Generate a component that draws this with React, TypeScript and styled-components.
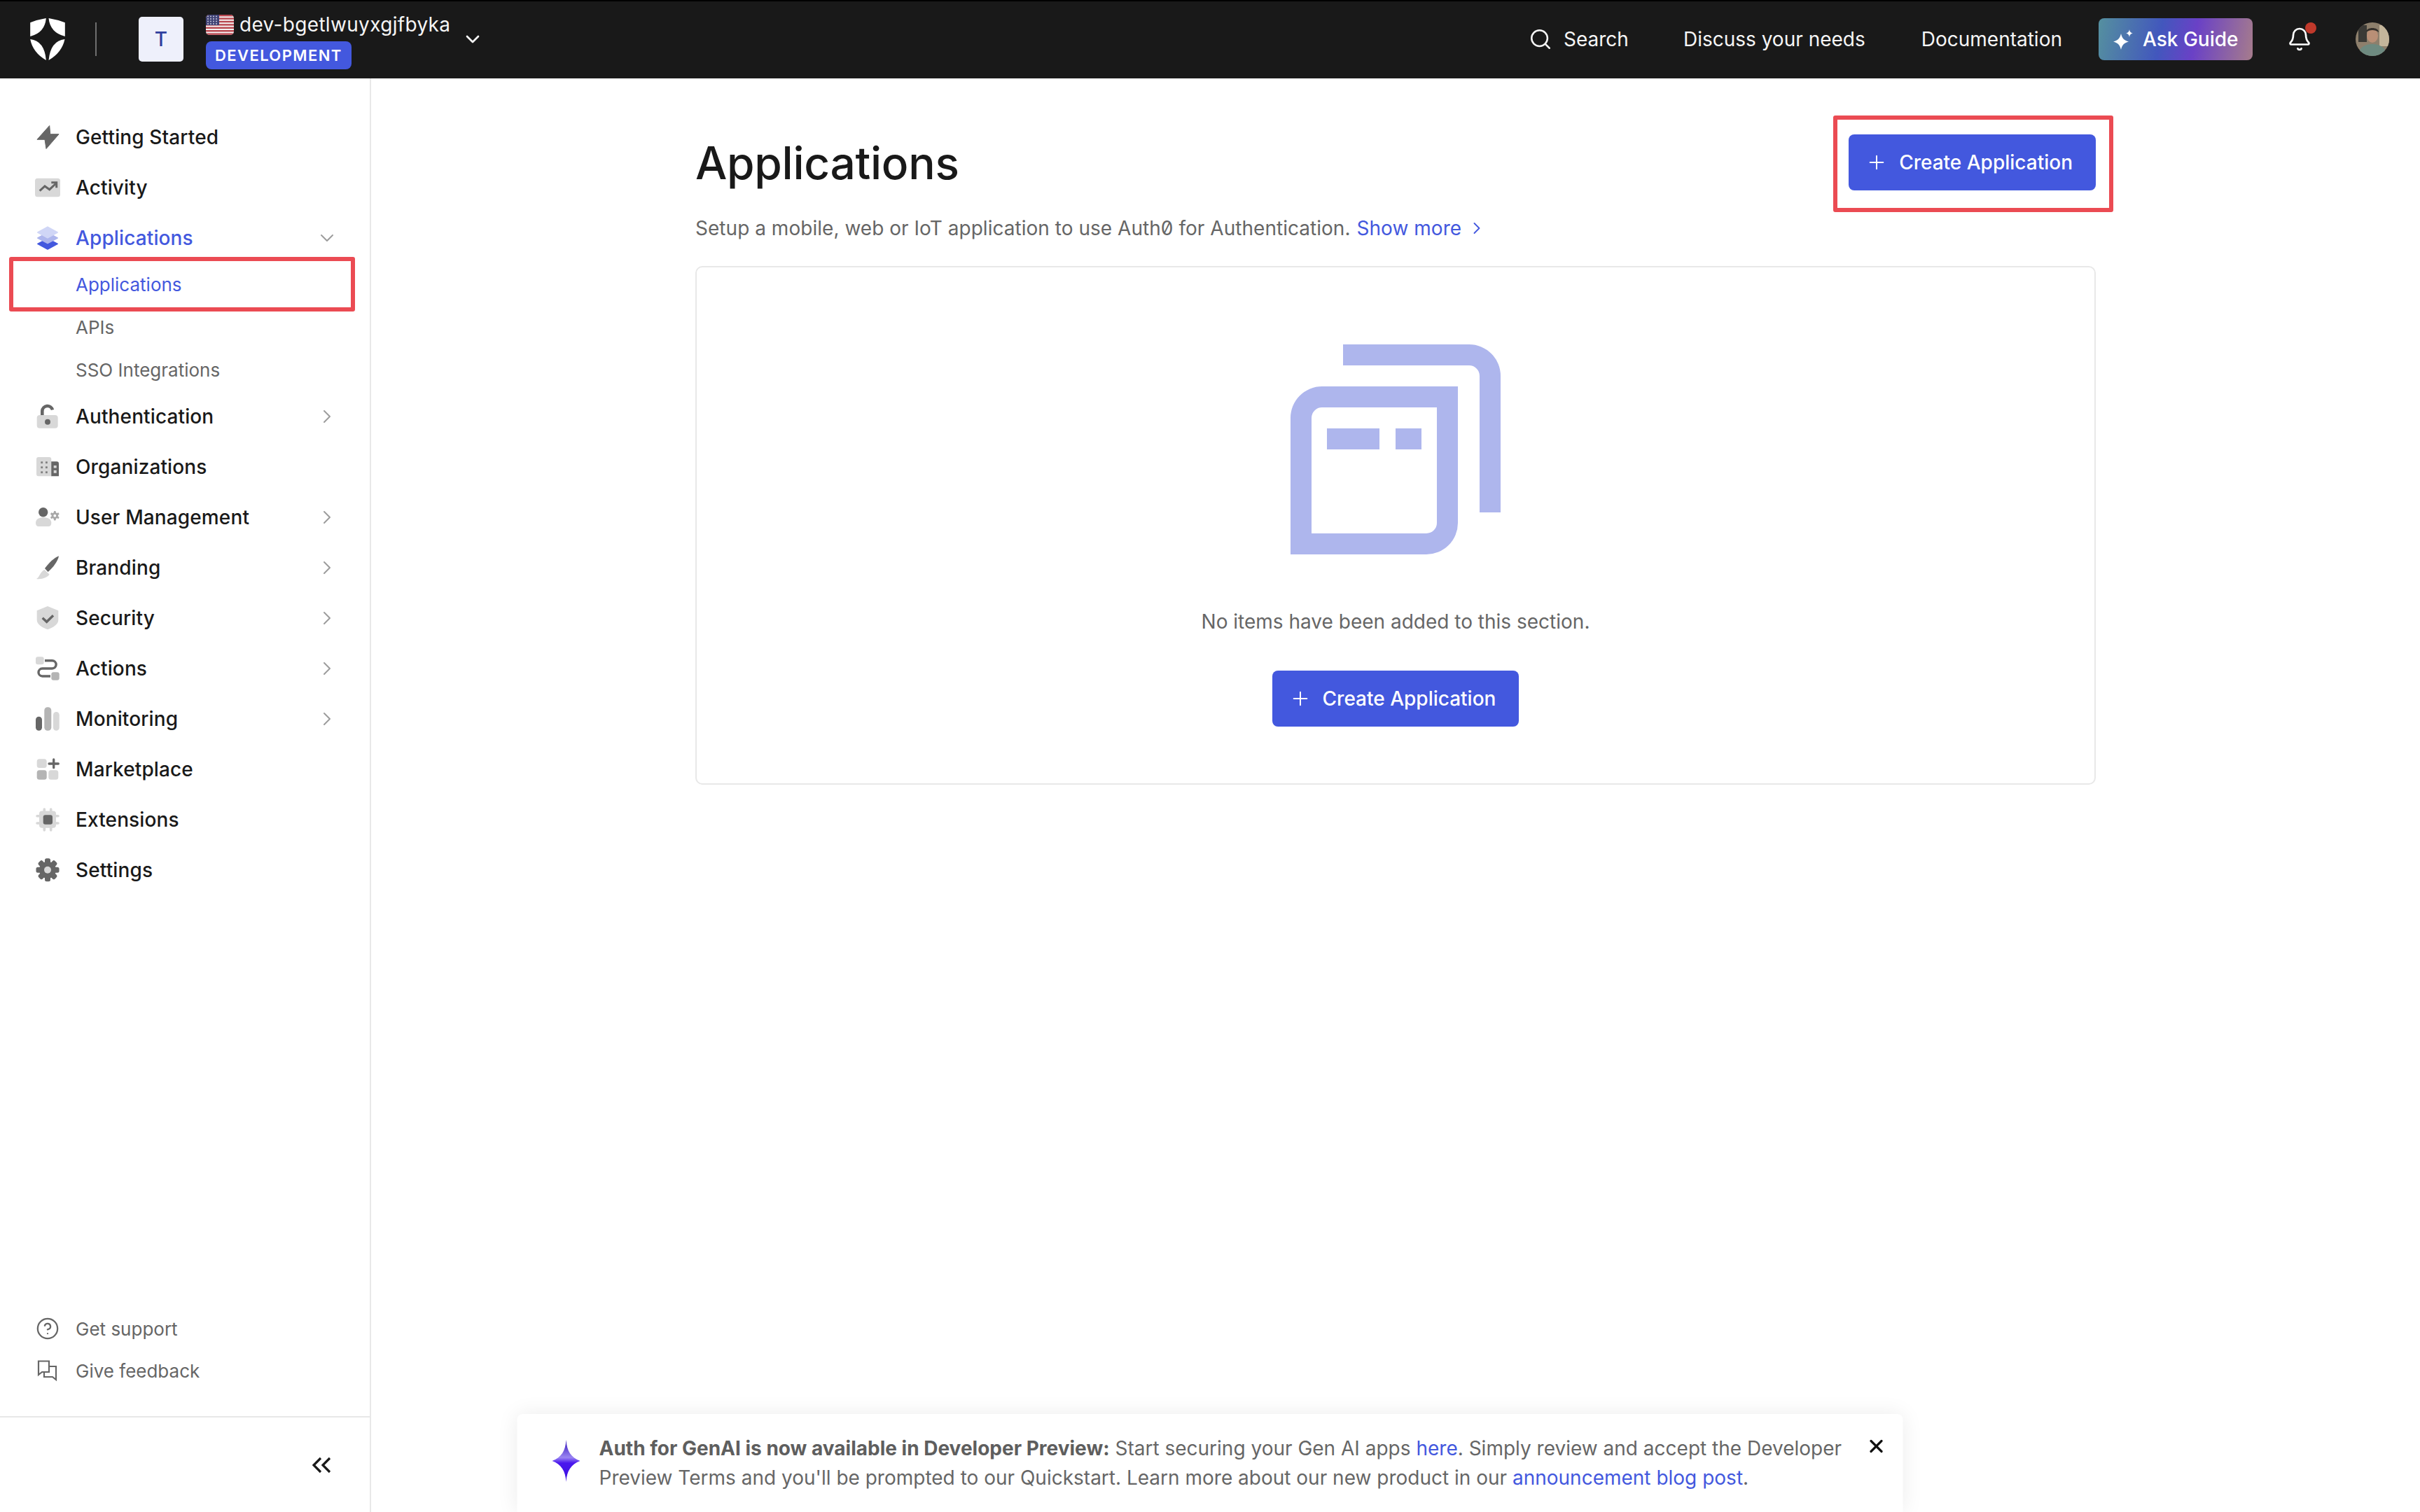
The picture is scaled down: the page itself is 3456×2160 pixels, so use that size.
import React from 'react';
import styled, { createGlobalStyle } from 'styled-components';
import { Search, Bell, Plus, ChevronRight, ChevronDown, CircleHelp, X } from 'lucide-react';

const Global = createGlobalStyle`
  html, body { margin: 0; padding: 0; background: #fff; }
  * { box-sizing: border-box; }
  body { font-family: Inter, "Noto Sans", sans-serif; color: #191919; }
`;

const Page = styled.div`
  position: relative;
  width: 3456px;
  height: 2160px;
  display: flex;
  flex-direction: column;
  overflow: hidden;
  background: #fff;
`;

const Header = styled.header`
  height: 112px;
  flex: none;
  background: #191919;
  border-top: 2px solid #000;
  padding: 0 44px 2px 43px;
  display: flex;
  align-items: center;
  color: #f5f5f5;
`;
const Divider = styled.div`
  width: 2px;
  height: 48px;
  background: #6f6f6f;
  margin: 0 60px 0 43px;
`;
const TenantBox = styled.div`
  width: 64px;
  height: 64px;
  border-radius: 5px;
  background: #eef0fb;
  color: #2f3f9e;
  font-size: 28px;
  font-weight: 500;
  display: flex;
  align-items: center;
  justify-content: center;
  margin-right: 32px;
`;
const TenantInfo = styled.div`
  display: flex;
  flex-direction: column;
  gap: 8px;
  align-items: flex-start;
  padding-top: 6px;
`;
const TenantName = styled.div`
  display: flex;
  align-items: center;
  gap: 8px;
  font-size: 28px;
  line-height: 32px;
  letter-spacing: 0.33px;
  color: #f5f5f5;
`;
const Badge = styled.div`
  height: 40px;
  padding: 0 13px;
  border-radius: 8px;
  background: #4358de;
  color: #fff;
  font-size: 22px;
  font-weight: 600;
  letter-spacing: 1.4px;
  display: flex;
  align-items: center;
`;
const TenantChevron = styled.div`
  margin-left: 16px;
  display: flex;
  color: #f5f5f5;
`;
const HeaderSpacer = styled.div`
  flex: 1;
`;
const NavGroup = styled.nav`
  display: flex;
  align-items: center;
  gap: 80px;
`;
const NavSearch = styled.a`
  display: flex;
  align-items: center;
  gap: 16px;
  font-size: 28px;
  line-height: 40px;
  color: #f5f5f5;
  margin-right: -2px;
`;
const NavLink = styled.a`
  font-size: 28px;
  line-height: 40px;
  color: #f5f5f5;
`;
const AskGuide = styled.button`
  margin-left: 52px;
  width: 220px;
  height: 60px;
  border: 0;
  border-radius: 8px;
  background: linear-gradient(100deg, #55909f 0%, #4257bd 40%, #6a41c6 62%, #a67c8c 100%);
  color: #fff;
  font: 500 28px Inter, sans-serif;
  display: flex;
  align-items: center;
  gap: 11px;
  padding: 0 0 0 20px;
`;
const BellWrap = styled.div`
  position: relative;
  margin-left: 49px;
  display: flex;
  color: #fff;
`;
const BellDot = styled.span`
  position: absolute;
  top: -6px;
  right: -6px;
  width: 16px;
  height: 16px;
  border-radius: 50%;
  background: #c0392b;
`;
const Avatar = styled.svg`
  margin-left: 62px;
  width: 48px;
  height: 48px;
  border-radius: 50%;
`;

const Body = styled.div`
  flex: 1;
  display: flex;
  min-height: 0;
`;
const Sidebar = styled.aside`
  width: 530px;
  flex: none;
  border-right: 2px solid #e8e8e8;
  display: flex;
  flex-direction: column;
  padding-top: 48px;
`;
const NavItem = styled.div<{ $active?: boolean }>`
  height: 72px;
  padding: 0 45px 0 44px;
  display: flex;
  align-items: center;
  gap: 16px;
  font-size: 28px;
  font-weight: 500;
  letter-spacing: 0.12px;
  color: ${p => (p.$active ? '#4358de' : '#191919')};
`;
const IconBox = styled.svg`
  width: 48px;
  height: 48px;
  flex: none;
`;
const ItemLabel = styled.span`
  flex: 1;
`;
const ItemChevron = styled.span`
  display: flex;
  color: #9c9c9c;
`;
const SubItem = styled.div<{ $active?: boolean }>`
  position: relative;
  height: 61px;
  padding-left: 108px;
  display: flex;
  align-items: center;
  font-size: 26px;
  color: ${p => (p.$active ? '#4358de' : '#666')};
`;
const SubHighlight = styled.span`
  position: absolute;
  left: 13px;
  top: -9px;
  width: 494px;
  height: 78px;
  border: 6px solid #eb4b53;
  border-radius: 3px;
`;
const SideBottom = styled.div`
  margin-top: auto;
  padding-bottom: 35px;
  border-bottom: 2px solid #e8e8e8;
`;
const SupportItem = styled.div`
  height: 60px;
  padding-left: 44px;
  display: flex;
  align-items: center;
  gap: 16px;
  font-size: 26px;
  color: #666;
`;
const SupportIcon = styled.span`
  width: 48px;
  height: 48px;
  display: flex;
  align-items: center;
  justify-content: center;
`;
const Collapse = styled.div`
  height: 135px;
  display: flex;
  align-items: center;
  justify-content: flex-end;
  padding: 0 54px 0 0;
`;

const Main = styled.main`
  flex: 1;
  min-width: 0;
  display: flex;
  justify-content: center;
`;
const Content = styled.div`
  width: 2000px;
  padding-top: 80px;
`;
const TitleRow = styled.div`
  height: 80px;
  display: flex;
  align-items: center;
  justify-content: space-between;
`;
const Title = styled.h1`
  margin: 2px 0 0;
  font-size: 64px;
  line-height: 80px;
  font-weight: 500;
  letter-spacing: -0.3px;
  color: #191919;
`;
const ButtonWrap = styled.div`
  position: relative;
  display: flex;
`;
const ButtonHighlight = styled.span`
  position: absolute;
  left: -22px;
  top: -27px;
  right: -25px;
  bottom: -31px;
  border: 6px solid #eb4b53;
  border-radius: 3px;
`;
const PrimaryButton = styled.button`
  height: 80px;
  border: 0;
  border-radius: 8px;
  background: #4358de;
  color: #fff;
  font: 500 28px Inter, sans-serif;
  display: flex;
  align-items: center;
  gap: 16px;
  padding: 0 33px 0 24px;
`;
const Subtitle = styled.p`
  margin: 34px 0;
  font-size: 28px;
  line-height: 40px;
  letter-spacing: 0.03px;
  color: #666;
  display: flex;
  align-items: center;
`;
const Zero = styled.span`
  font-feature-settings: "zero" 1;
`;
const ShowMore = styled.a`
  margin-left: 9px;
  color: #4358de;
  display: flex;
  align-items: center;
  gap: 8px;
`;
const Card = styled.section`
  height: 741px;
  border: 2px solid #e8e8e8;
  border-radius: 10px;
  display: flex;
  flex-direction: column;
  align-items: center;
  padding-top: 110px;
`;
const EmptyArt = styled.svg`
  width: 300px;
  height: 300px;
`;
const EmptyText = styled.p`
  margin: 76px 0 50px;
  font-size: 28px;
  line-height: 40px;
  color: #666;
`;
const Banner = styled.aside`
  position: absolute;
  left: 50%;
  bottom: 0;
  transform: translateX(-50%);
  width: 1979px;
  height: 140px;
  padding: 28px 23px 0 50px;
  background: #fff;
  border-radius: 8px 8px 0 0;
  box-shadow: 0 0 30px rgba(0, 0, 0, 0.08);
  display: flex;
  align-items: flex-start;
  gap: 27px;
`;
const BannerStar = styled.svg`
  width: 40px;
  height: 60px;
  margin-top: 9px;
  flex: none;
`;
const BannerText = styled.div`
  flex: 1;
`;
const BannerLine = styled.p`
  margin: 0;
  font-size: 28px;
  line-height: 42px;
  color: #666;
  white-space: nowrap;
`;
const Strong = styled.strong`
  font-weight: 700;
  color: #5e5e5e;
`;
const BlueLink = styled.a`
  color: #4358de;
`;
const BannerClose = styled.span`
  display: flex;
  color: #111;
  margin-top: 3px;
`;

const Logo = () => (
  <svg width="50" height="60" viewBox="129 78 149 180" fill="#fff">
    <path d="M129 97Q160 84 197 78Q192 140 129 156Z" />
    <path d="M208 78Q245 84 278 97L278 156Q214 140 208 78Z" />
    <path d="M129 168Q190 175 197 258Q140 225 129 168Z" />
    <path d="M277 168Q216 175 208 258Q265 225 277 168Z" />
  </svg>
);

const Flag = () => (
  <svg width="40" height="29" viewBox="0 0 40 29">
    <defs>
      <clipPath id="flagclip"><rect width="40" height="29" rx="5" /></clipPath>
    </defs>
    <g clipPath="url(#flagclip)">
      <rect width="40" height="29" fill="#f4f1f1" />
      {[0, 4.4, 8.8, 13.2, 17.6, 22, 26.4].map(y => (
        <rect key={y} y={y} width="40" height="2.4" fill="#b8474f" />
      ))}
      <rect width="19" height="15" fill="#3f4274" />
      {[2.5, 6, 9.5, 13].map(y =>
        [3, 7, 11, 15].map(x => <circle key={`${x}-${y}`} cx={x} cy={y} r="0.9" fill="#d5d6e6" />)
      )}
    </g>
  </svg>
);

const Sparkle = ({ size = 32 }: { size?: number }) => (
  <svg width={size} height={size} viewBox="0 0 32 32" fill="#fff">
    <path d="M12 8C13.5 14.500 16 17.500 23 19.500C16 21.500 13.500 24.500 12 31C10.500 24.500 8 21.500 1 19.500C8 17.500 10.500 14.500 12 8Z" />
    <path d="M24 2C24.400 5.200 25.600 6.600 29 7.500C25.600 8.400 24.400 9.800 24 13C23.600 9.800 22.400 8.400 19 7.500C22.400 6.600 23.600 5.200 24 2Z" />
  </svg>
);

const D = '#666';
const M = '#b4b4b4';
const L = '#d8d8d8';

const icons: Record<string, React.ReactNode> = {
  bolt: (
    <path
      d="M26.7 7.5L9 27.3H20L22 40.5L40 19.7H27.7Z"
      fill={D}
      stroke={D}
      strokeWidth="1"
      strokeLinejoin="round"
    />
  ),
  activity: (
    <>
      <rect x="6" y="10.7" width="36" height="26.6" rx="3.5" fill={L} />
      <path d="M12.7 28.7L20 22L26.7 26.7L35.5 18.5" fill="none" stroke={D} strokeWidth="3" />
      <path d="M29.3 16.7H36.7V24.3" fill="none" stroke={D} strokeWidth="3" />
    </>
  ),
  apps: (
    <g strokeLinejoin="round" strokeWidth="1.5">
      <path d="M24 24.8L38.2 32.3L24 40L9.8 32.3Z" fill="#4358de" stroke="#4358de" />
      <path d="M24 16.4L38.2 24L24 31.6L9.8 24Z" fill="#aeb6ed" stroke="#aeb6ed" />
      <path d="M24 8.1L38.2 16L24 23.9L9.8 16Z" fill="#d0d6f6" stroke="#d0d6f6" />
    </g>
  ),
  lock: (
    <>
      <path d="M16.3 24V16A7.5 7.5 0 0 1 31 14.5" fill="none" stroke={D} strokeWidth="4.6" />
      <rect x="8.7" y="22" width="30" height="18.7" rx="4" fill={L} />
      <circle cx="24" cy="31.7" r="4" fill={D} />
    </>
  ),
  org: (
    <>
      <path d="M29 16.3H37A3 3 0 0 1 40 19.3V37.3H29Z" fill={D} />
      <path d="M11 10H26.3A3 3 0 0 1 29.3 13V37.3H11A3 3 0 0 1 8 34.3V13A3 3 0 0 1 11 10Z" fill={L} />
      {[16.3, 23.3, 30.3].map(y =>
        [14.3, 21].map(x => <rect key={`${x}-${y}`} x={x} y={y} width="2.8" height="2.8" fill="#808080" />)
      )}
      <rect x="32.7" y="22" width="4" height="3.6" fill={L} />
      <rect x="32.7" y="28.8" width="4" height="4" fill={L} />
    </>
  ),
  user: (
    <>
      <circle cx="17.7" cy="16.7" r="6.7" fill={D} />
      <path d="M7 32C7 26.5 12 24.3 18 24.3C24.5 24.3 29.3 26.5 29.3 32C29.3 35 28 37 25 37H11C8.500 37 7 35 7 32Z" fill={L} />
      {[0, 60, 120].map(a => (
        <rect key={a} x="32.8" y="15" width="3" height="13.400" rx="1" fill="#a8a8a8" transform={`rotate(${a} 34.3 21.7)`} />
      ))}
      <circle cx="34.3" cy="21.7" r="4.700" fill="#a8a8a8" />
      <circle cx="34.3" cy="21.7" r="1.900" fill="#fff" />
    </>
  ),
  brush: (
    <>
      <path d="M40 7.300C39 14 32 24 24.500 30L20 25C26 17 33 10 40 7.300Z" fill={D} />
      <path d="M19.500 27L26.500 33.500C24 38 16 41 8 40C13 37 13 30 19.500 27Z" fill={L} />
    </>
  ),
  shield: (
    <>
      <path d="M24 7L39.300 13.200V27C39.300 33 31 38 24 40.300C17 38 8.700 33 8.700 27V13.200Z" fill={L} />
      <path d="M16.700 23.700L22.700 29.300L32 20.300" fill="none" stroke={D} strokeWidth="3.400" />
    </>
  ),
  actions: (
    <>
      <rect x="7" y="7.300" width="11.700" height="11" rx="3" fill={L} />
      <rect x="29.300" y="29.300" width="11.400" height="11.400" rx="3" fill={M} />
      <path d="M20 12.700H30.500A5.600 5.600 0 0 1 30.500 24H16.500A5.500 5.500 0 0 0 16.500 35H28" fill="none" stroke={D} strokeWidth="3.400" />
    </>
  ),
  bars: (
    <>
      <rect x="7" y="20.700" width="9" height="20" rx="4.500" fill={D} />
      <rect x="19.300" y="7.300" width="10" height="33.400" rx="4.500" fill={M} />
      <rect x="32" y="14" width="8.700" height="26.700" rx="4.300" fill={L} />
    </>
  ),
  market: (
    <>
      <rect x="8.700" y="9.300" width="14" height="12.700" rx="3.500" fill={L} />
      <rect x="8.700" y="25.300" width="14" height="13.400" rx="3.500" fill={M} />
      <rect x="25.300" y="25.300" width="14" height="13.400" rx="3.500" fill={L} />
      <path d="M32.700 10V21.700M26 16H39.300" stroke={D} strokeWidth="3.300" strokeLinecap="round" />
    </>
  ),
  chip: (
    <>
      <path d="M19.300 9V39M28.700 9V39M9 18.700H39M9 29H39" stroke={L} strokeWidth="3.600" strokeLinecap="round" />
      <rect x="12" y="11.500" width="24" height="24.200" rx="4" fill={L} />
      <rect x="17.700" y="17.300" width="13.300" height="13.400" rx="3" fill={D} />
    </>
  ),
  gear: (
    <>
      {[0, 45, 90, 135].map(a => (
        <rect key={a} x="20" y="7.200" width="8" height="33" rx="2.500" fill={D} transform={`rotate(${a} 24 23.700)`} />
      ))}
      <circle cx="24" cy="23.700" r="12" fill={D} />
      <circle cx="24" cy="23.700" r="5" fill={L} />
    </>
  ),
};

const Item = ({ icon, label, chevron, active }: { icon: string; label: string; chevron?: boolean; active?: boolean }) => (
  <NavItem $active={active}>
    <IconBox viewBox="0 0 48 48">{icons[icon]}</IconBox>
    <ItemLabel>{label}</ItemLabel>
    {chevron && (
      <ItemChevron>
        {active ? <ChevronDown size={32} strokeWidth={1.5} /> : <ChevronRight size={32} strokeWidth={1.5} />}
      </ItemChevron>
    )}
  </NavItem>
);

const CreateButton = () => (
  <PrimaryButton>
    <Plus size={32} strokeWidth={1.5} />
    Create Application
  </PrimaryButton>
);

export default function App() {
  return (
    <Page>
      <Global />
      <Header>
        <Logo />
        <Divider />
        <TenantBox>T</TenantBox>
        <TenantInfo>
          <TenantName>
            <Flag />
            dev-bgetlwuyxgjfbyka
          </TenantName>
          <Badge>DEVELOPMENT</Badge>
        </TenantInfo>
        <TenantChevron>
          <ChevronDown size={32} strokeWidth={2} />
        </TenantChevron>
        <HeaderSpacer />
        <NavGroup>
          <NavSearch>
            <Search size={34} strokeWidth={1.8} />
            Search
          </NavSearch>
          <NavLink>Discuss your needs</NavLink>
          <NavLink>Documentation</NavLink>
        </NavGroup>
        <AskGuide>
          <Sparkle />
          Ask Guide
        </AskGuide>
        <BellWrap>
          <Bell size={36} strokeWidth={1.8} />
          <BellDot />
        </BellWrap>
        <Avatar viewBox="0 0 48 48">
          <rect width="48" height="48" fill="#8d7f6c" />
          <rect x="4" y="4" width="12" height="24" fill="#3b3a36" />
          <rect x="34" y="4" width="14" height="30" fill="#c4b59b" />
          <ellipse cx="24" cy="19" rx="8" ry="10" fill="#b98f76" />
          <path d="M15 14C15 6 33 6 33 14C28 10 20 10 15 14Z" fill="#35302b" />
          <path d="M4 48C4 34 16 31 24 31C32 31 44 34 44 48Z" fill="#6e8a80" />
        </Avatar>
      </Header>
      <Body>
        <Sidebar>
          <Item icon="bolt" label="Getting Started" />
          <Item icon="activity" label="Activity" />
          <Item icon="apps" label="Applications" chevron active />
          <SubItem $active>
            Applications
            <SubHighlight />
          </SubItem>
          <SubItem>APIs</SubItem>
          <SubItem>SSO Integrations</SubItem>
          <Item icon="lock" label="Authentication" chevron />
          <Item icon="org" label="Organizations" />
          <Item icon="user" label="User Management" chevron />
          <Item icon="brush" label="Branding" chevron />
          <Item icon="shield" label="Security" chevron />
          <Item icon="actions" label="Actions" chevron />
          <Item icon="bars" label="Monitoring" chevron />
          <Item icon="market" label="Marketplace" />
          <Item icon="chip" label="Extensions" />
          <Item icon="gear" label="Settings" />
          <SideBottom>
            <SupportItem>
              <SupportIcon>
                <CircleHelp size={34} strokeWidth={1.6} color="#666" />
              </SupportIcon>
              Get support
            </SupportItem>
            <SupportItem>
              <SupportIcon>
                <svg width="30" height="30" viewBox="0 0 30 30" fill="none" stroke="#666" strokeWidth="2.2">
                  <path d="M2 1.500H17V17H7L2 21Z" />
                  <path d="M17 9H27V28L22 24H10V17" />
                </svg>
              </SupportIcon>
              Give feedback
            </SupportItem>
          </SideBottom>
          <Collapse>
            <svg width="30" height="24" viewBox="0 0 30 24" fill="none" stroke="#191919" strokeWidth="3.200">
              <path d="M14 2L4 12L14 22" />
              <path d="M27 2L17 12L27 22" />
            </svg>
          </Collapse>
        </Sidebar>
        <Main>
          <Content>
            <TitleRow>
              <Title>Applications</Title>
              <ButtonWrap>
                <CreateButton />
                <ButtonHighlight />
              </ButtonWrap>
            </TitleRow>
            <Subtitle>
              <span>
                Setup a mobile, web or IoT application to use Auth<Zero>0</Zero> for Authentication.
              </span>
              <ShowMore>
                Show more
                <ChevronRight size={28} strokeWidth={1.6} />
              </ShowMore>
            </Subtitle>
            <Card>
              <EmptyArt viewBox="0 0 300 300" fill="#aeb6ed">
                <path fillRule="evenodd" d="M75 0H255A45 45 0 0 1 300 45V240H270V45A15 15 0 0 0 255 30H75Z" />
                <path
                  fillRule="evenodd"
                  d="M45 60H239V255A45 45 0 0 1 194 300H0V105A45 45 0 0 1 45 60ZM45 90A15 15 0 0 0 30 105V270H194A15 15 0 0 0 209 255V90Z"
                />
                <rect x="52" y="120" width="75" height="30" />
                <rect x="150" y="120" width="37" height="30" />
              </EmptyArt>
              <EmptyText>No items have been added to this section.</EmptyText>
              <CreateButton />
            </Card>
          </Content>
        </Main>
      </Body>
      <Banner>
        <BannerStar viewBox="0 0 40 60">
          <defs>
            <linearGradient id="stargrad" x1="0" y1="0" x2="0" y2="1">
              <stop offset="0" stopColor="#2f10b8" />
              <stop offset="0.42" stopColor="#9a86f2" />
              <stop offset="0.55" stopColor="#4a17ee" />
              <stop offset="1" stopColor="#3a0fe0" />
            </linearGradient>
          </defs>
          <path d="M20 0C21 16 27 25 40 30C27 35 21 44 20 60C19 44 13 35 0 30C13 25 19 16 20 0Z" fill="url(#stargrad)" />
        </BannerStar>
        <BannerText>
          <BannerLine>
            <Strong>Auth for GenAI is now available in Developer Preview:</Strong> Start securing your Gen AI apps{' '}
            <BlueLink>here</BlueLink>. Simply review and accept the Developer
          </BannerLine>
          <BannerLine>
            Preview Terms and you'll be prompted to our Quickstart. Learn more about our new product in our{' '}
            <BlueLink>announcement blog post</BlueLink>.
          </BannerLine>
        </BannerText>
        <BannerClose>
          <X size={30} strokeWidth={2.6} />
        </BannerClose>
      </Banner>
    </Page>
  );
}
